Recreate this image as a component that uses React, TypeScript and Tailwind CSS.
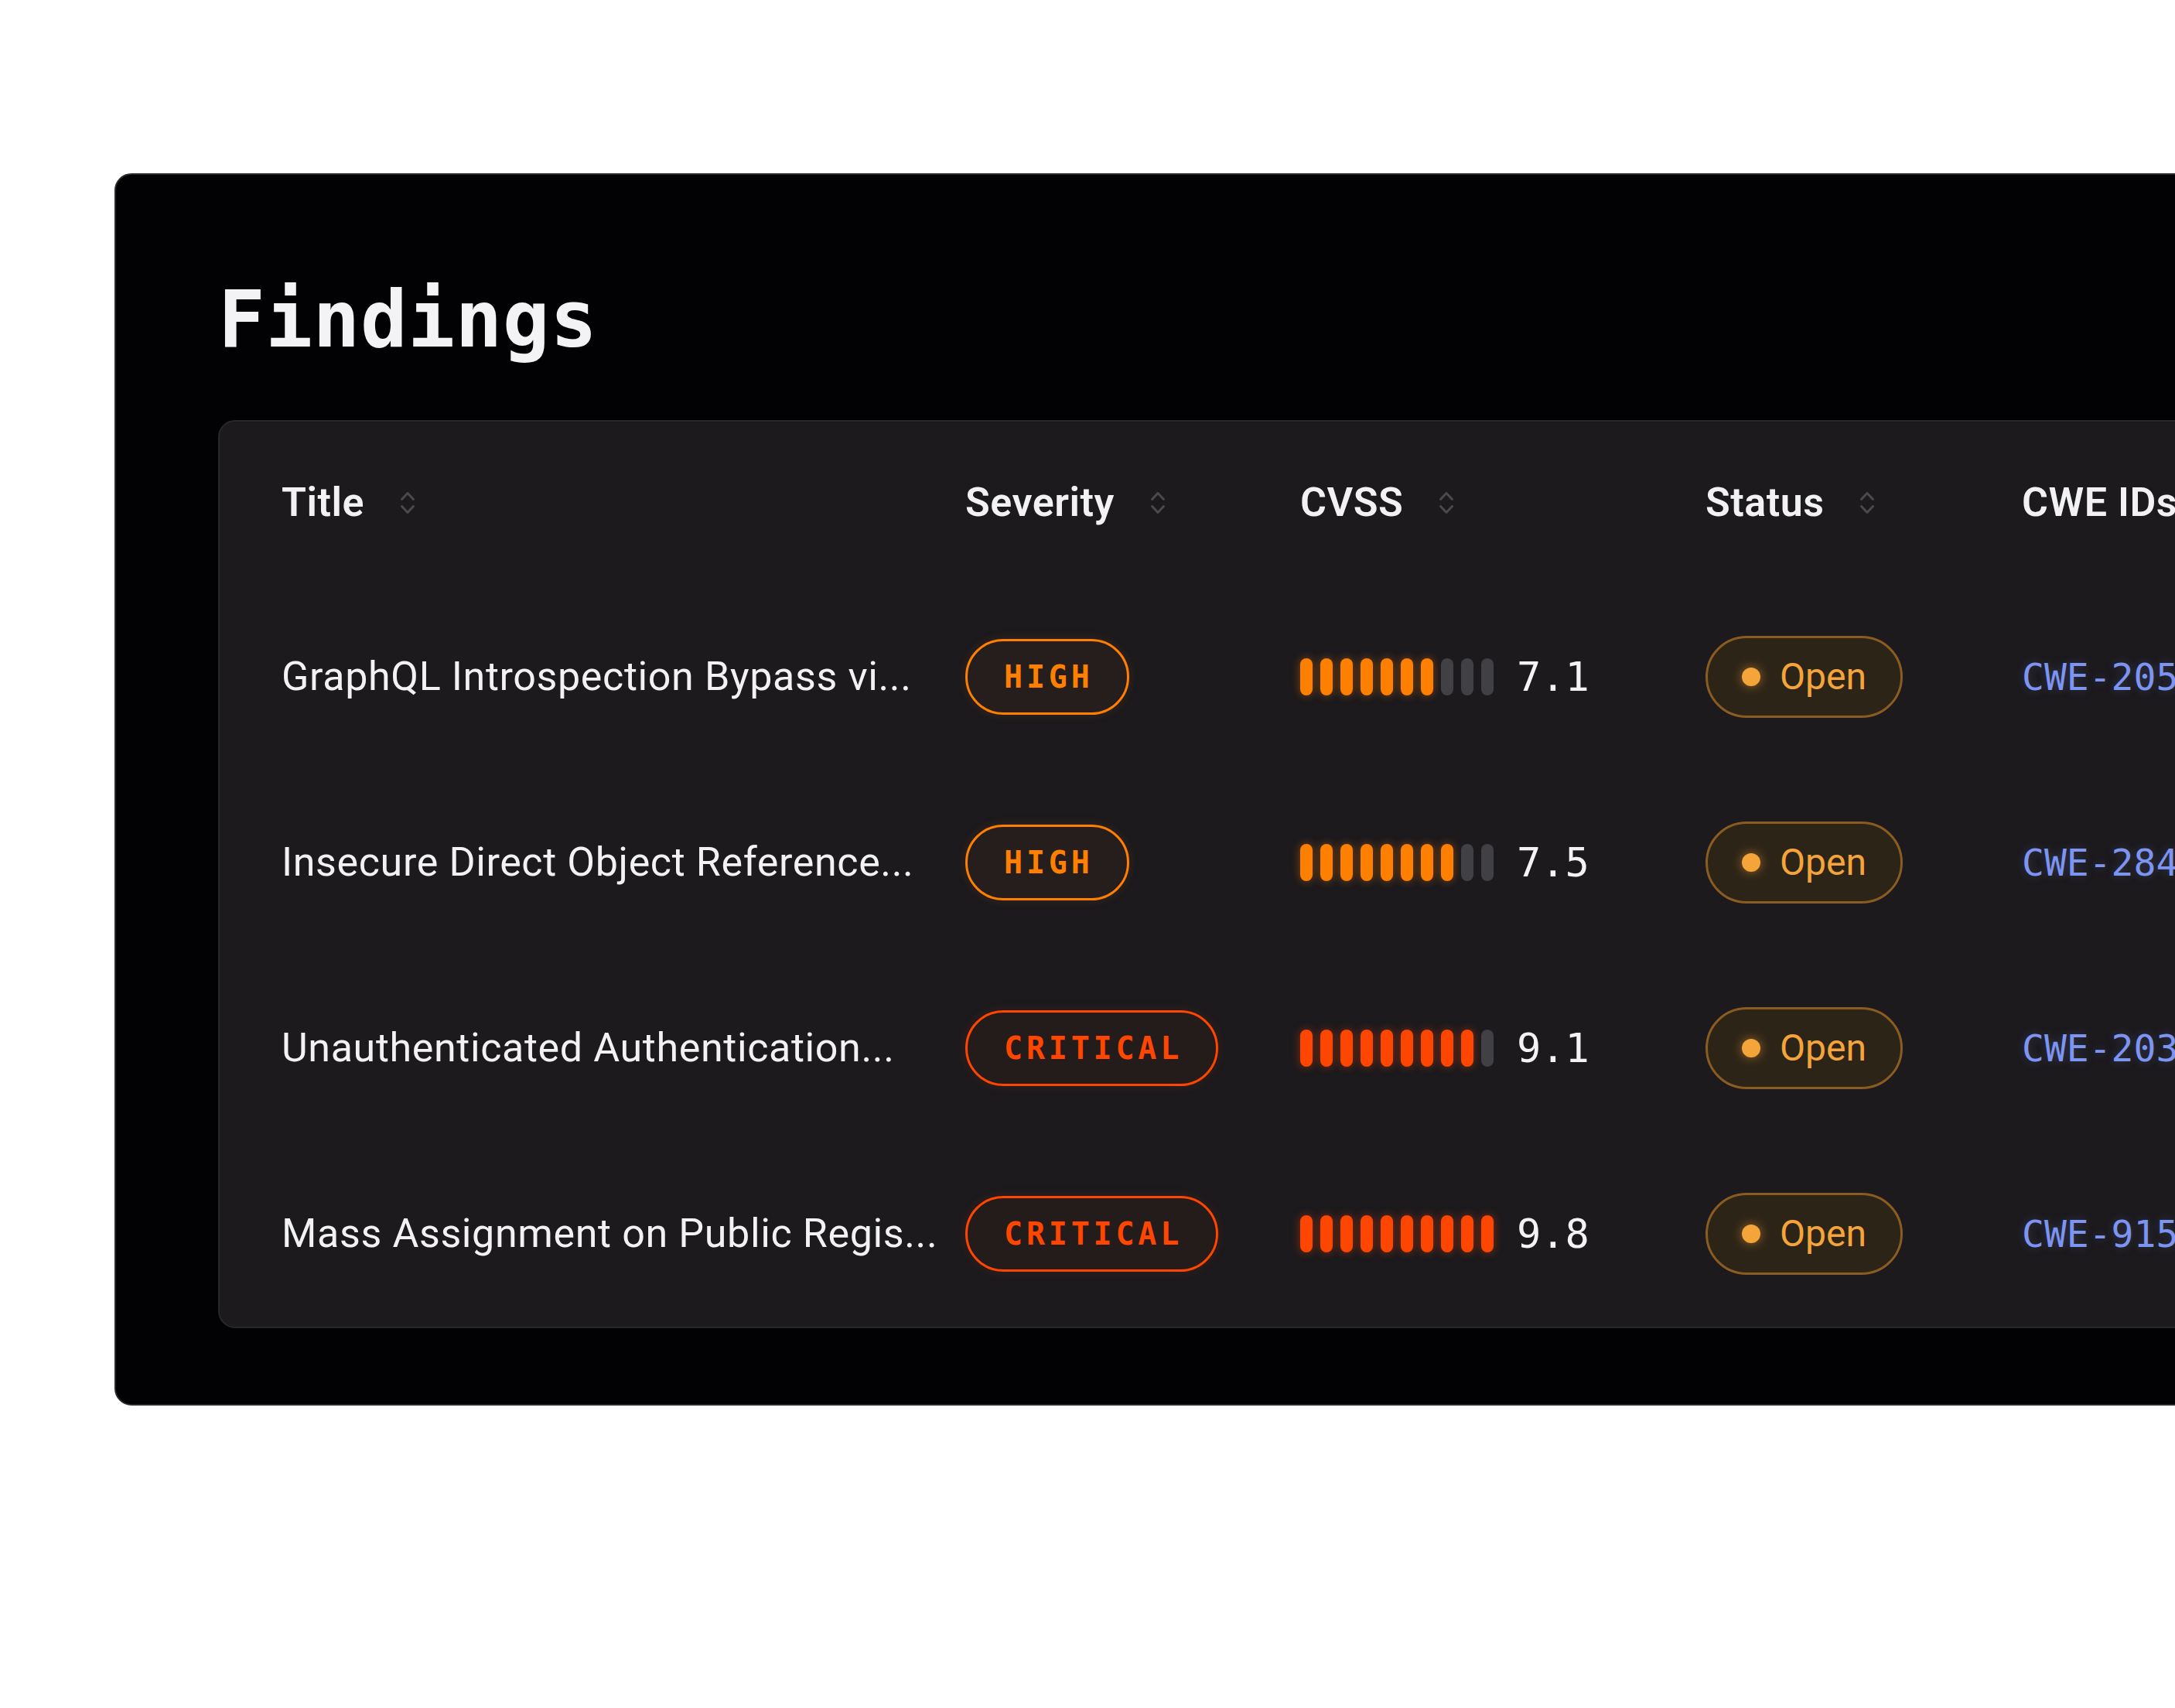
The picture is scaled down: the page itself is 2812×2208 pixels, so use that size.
import React from 'react';

type Severity = 'HIGH' | 'CRITICAL';

type Finding = {
  title: string;
  severity: Severity;
  cvss: string;
  filled: number;
  cwe: string;
};

const findings: Finding[] = [
  { title: 'GraphQL Introspection Bypass vi...', severity: 'HIGH', cvss: '7.1', filled: 7, cwe: 'CWE-205' },
  { title: 'Insecure Direct Object Reference...', severity: 'HIGH', cvss: '7.5', filled: 8, cwe: 'CWE-284' },
  { title: 'Unauthenticated Authentication...', severity: 'CRITICAL', cvss: '9.1', filled: 9, cwe: 'CWE-203' },
  { title: 'Mass Assignment on Public Regis...', severity: 'CRITICAL', cvss: '9.8', filled: 10, cwe: 'CWE-915' },
];

const sans = "font-['Roboto','Noto_Sans',sans-serif]";
const mono = "font-['DejaVu_Sans_Mono','Liberation_Mono',monospace]";

const SortIcon = () => (
  <svg width="20" height="30" viewBox="0 0 20 30" fill="none" className="ml-[46px] shrink-0">
    <path d="M2.5 10.5 L10 2.5 L17.5 10.5" stroke="#4a494d" strokeWidth="3" strokeLinecap="round" strokeLinejoin="round" />
    <path d="M2.5 19.5 L10 27.5 L17.5 19.5" stroke="#4a494d" strokeWidth="3" strokeLinecap="round" strokeLinejoin="round" />
  </svg>
);

const HeaderCell = ({ label, sort = true, width }: { label: string; sort?: boolean; width: string }) => (
  <div className={`flex items-center ${width}`}>
    <span className={`${sans} text-[52px] font-semibold leading-none tracking-[0.01em] text-[#f2f1f3] whitespace-nowrap`}>{label}</span>
    {sort && <SortIcon />}
  </div>
);

const SeverityBadge = ({ level }: { level: Severity }) =>
  level === 'HIGH' ? (
    <div className="flex h-[98px] items-center rounded-full border-[3px] border-[#ff7f00] bg-[#ff7f00]/[0.04] pl-[47px] pr-[43px] shadow-[0_0_14px_rgba(255,127,0,0.12)]">
      <span className={`${mono} text-[40px] font-bold leading-none tracking-[0.12em] text-[#ff7f00]`}>HIGH</span>
    </div>
  ) : (
    <div className="flex h-[98px] items-center rounded-full border-[3px] border-[#ff4600] bg-[#ff4600]/[0.04] pl-[47px] pr-[43px] shadow-[0_0_14px_rgba(255,70,0,0.12)]">
      <span className={`${mono} text-[40px] font-bold leading-none tracking-[0.12em] text-[#ff4600]`}>CRITICAL</span>
    </div>
  );

const CvssBar = ({ filled, level }: { filled: number; level: Severity }) => (
  <div className="flex gap-[10px]">
    {Array.from({ length: 10 }).map((_, i) =>
      i < filled ? (
        level === 'HIGH' ? (
          <div key={i} className="h-[48px] w-[16px] rounded-full bg-[#ff7f00] shadow-[0_0_12px_rgba(255,127,0,0.45)]" />
        ) : (
          <div key={i} className="h-[48px] w-[16px] rounded-full bg-[#ff4600] shadow-[0_0_12px_rgba(255,70,0,0.45)]" />
        )
      ) : (
        <div key={i} className="h-[48px] w-[16px] rounded-full bg-[#414044]" />
      )
    )}
  </div>
);

const StatusBadge = () => (
  <div className="flex h-[106px] items-center rounded-full border-[3px] border-[#8a5c22] bg-[#2d2418] pl-[44px] pr-[44px]">
    <span className="h-[24px] w-[24px] rounded-full bg-[#f5a43a] shadow-[0_0_14px_rgba(245,164,58,0.55)]" />
    <span className={`${sans} ml-[25px] text-[48px] leading-none text-[#f5a43a]`}>Open</span>
  </div>
);

export default function App() {
  return (
    <div className="h-[2208px] w-full overflow-hidden bg-white">
      <div className="ml-[148px] mt-[224px] w-[3400px] rounded-[22px] border-2 border-[#2a292c] bg-[#020103] pb-[98px] pl-[132px] pt-[137px]">
        <h1 className={`${mono} text-[101px] font-bold leading-none tracking-[0.005em] text-[#f3f2f4]`}>Findings</h1>

        <div className="mt-[79px] rounded-[22px] border-2 border-[#28272a] bg-[#1c1a1d] pl-[80px]">
          {/* header */}
          <div className="flex h-[210px] items-center">
            <HeaderCell label="Title" width="w-[884px]" />
            <HeaderCell label="Severity" width="w-[433px]" />
            <HeaderCell label="CVSS" width="w-[524px]" />
            <HeaderCell label="Status" width="w-[409px]" />
            <HeaderCell label="CWE IDs" sort={false} width="w-[600px]" />
          </div>

          {/* rows */}
          {findings.map((f) => (
            <div key={f.cwe} className="flex h-[240px] items-center">
              <div className="w-[884px]">
                <span className={`${sans} text-[52px] leading-none tracking-[0.012em] text-[#f2f1f3] whitespace-nowrap`}>{f.title}</span>
              </div>
              <div className="w-[433px]">
                <div className="flex">
                  <SeverityBadge level={f.severity} />
                </div>
              </div>
              <div className="flex w-[524px] items-center">
                <CvssBar filled={f.filled} level={f.severity} />
                <span className={`${mono} ml-[30px] text-[52px] leading-none text-[#f3f2f4]`}>{f.cvss}</span>
              </div>
              <div className="w-[409px]">
                <div className="flex">
                  <StatusBadge />
                </div>
              </div>
              <div className="w-[600px]">
                <span className={`${mono} text-[48px] leading-none text-[#7d95f0] [text-shadow:0_0_12px_rgba(125,149,240,0.25)]`}>{f.cwe}</span>
              </div>
            </div>
          ))}
        </div>
      </div>
    </div>
  );
}
